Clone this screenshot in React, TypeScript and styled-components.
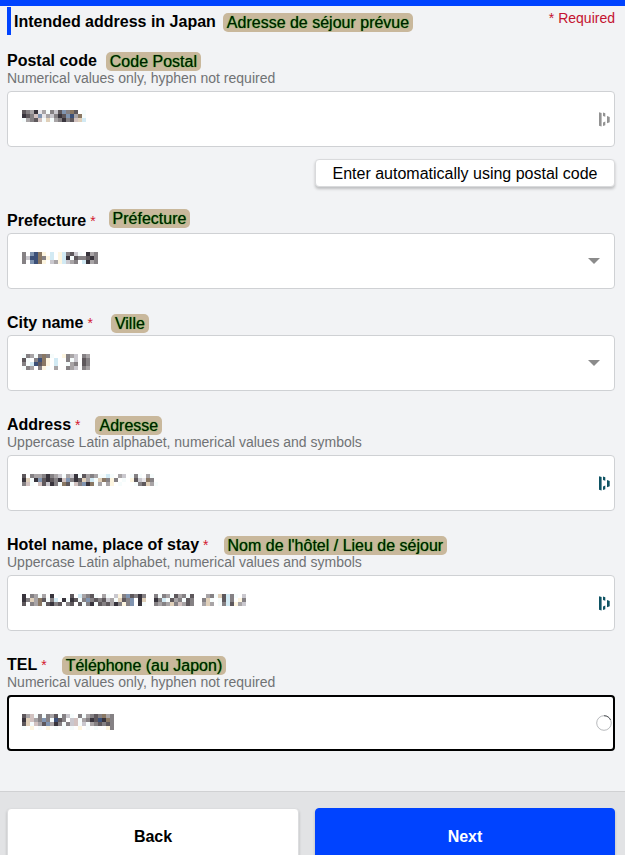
import React from 'react';
import styled, { createGlobalStyle, css } from 'styled-components';

const GlobalStyle = createGlobalStyle`
  *, *::before, *::after { box-sizing: border-box; }
  html { scrollbar-width: none; }
  body {
    margin: 0;
    background: #f2f3f5;
    color: #000;
    font-family: "Liberation Sans", Arial, sans-serif;
    font-size: 16px;
    line-height: 18px;
  }
  button, input, select { font: inherit; color: inherit; }
`;

const Page = styled.div`
  border-top: 6px solid #0043ff;
`;

const Form = styled.form`
  display: flex;
  flex-direction: column;
`;

const Content = styled.main`
  display: flex;
  flex-direction: column;
  gap: 24px;
  padding: 1px 10px 40px 7px;
`;

const Header = styled.header`
  display: flex;
  justify-content: space-between;
  align-items: flex-start;
  margin-bottom: -8px;
`;

const TitleRow = styled.div`
  display: flex;
  align-items: center;
  gap: 7px;
  height: 28px;
  padding: 2px 0 0 3px;
  border-left: 4px solid #0043ff;
`;

const Title = styled.h1`
  margin: 0;
  font-size: 16px;
`;

const RequiredNote = styled.span`
  padding-top: 2px;
  color: #c4122f;
  font-size: 14px;
`;

const Tag = styled.span`
  padding: 0 4px;
  border-radius: 5px;
  background: #c9b89c;
  color: #001c00;
  line-height: 19px;
  text-shadow: 0 0 1px #00a000;
  white-space: nowrap;
`;

const Field = styled.div`
  display: flex;
  flex-direction: column;
`;

const LabelRow = styled.div<{ $gap: number; $raised?: boolean }>`
  display: flex;
  align-items: center;
  gap: ${p => p.$gap}px;
  height: 18px;
  padding-top: 2px;

  ${Tag} {
    margin-bottom: ${p => (p.$raised ? 6 : 0)}px;
  }
`;

const Label = styled.label`
  font-weight: 700;
`;

const Star = styled.span`
  margin-left: 4px;
  color: #d3172f;
  font-size: 14px;
  font-weight: 400;
`;

const Hint = styled.div`
  color: #707274;
  font-size: 14px;
`;

const Control = styled.div`
  position: relative;
  display: grid;
  margin-top: 4px;
`;

const box = css`
  width: 100%;
  height: 56px;
  padding: 0 40px 0 14px;
  border: 1px solid #cfd1d4;
  border-radius: 4px;
  background: #fff;
  appearance: none;
  outline: none;
`;

const TextInput = styled.input<{ $active?: boolean }>`
  ${box}
  ${p => p.$active && 'border: 2px solid #000;'}
`;

const Select = styled.select`
  ${box}
`;

const Masked = styled.svg`
  position: absolute;
  top: 19px;
  left: 15px;
  pointer-events: none;
`;

const Adornment = styled.span<{ $right: number }>`
  position: absolute;
  top: 0;
  bottom: 0;
  right: ${p => p.$right}px;
  display: flex;
  align-items: center;
  pointer-events: none;
`;

const AutoFill = styled.button`
  align-self: flex-end;
  width: 300px;
  height: 28px;
  margin-top: -12px;
  padding: 2px 0 0;
  border: 1px solid #d9dadc;
  border-radius: 4px;
  background: #fff;
  box-shadow: 0 2px 3px rgba(0, 0, 0, 0.22);
`;

const Footer = styled.footer`
  display: grid;
  grid-template-columns: 292fr 300fr;
  gap: 16px;
  padding: 16px 10px 16px 7px;
  border-top: 1px solid #d0d1d3;
  background: #e2e3e5;
`;

const NavButton = styled.button<{ $primary?: boolean }>`
  height: 56px;
  padding: 2px 0 0;
  border: 1px solid ${p => (p.$primary ? '#0043ff' : '#dcdddf')};
  border-radius: 4px;
  background: ${p => (p.$primary ? '#0043ff' : '#fff')};
  color: ${p => (p.$primary ? '#fff' : '#000')};
  font-weight: 700;
  box-shadow: 0 2px 3px rgba(0, 0, 0, 0.2);
`;

const tones: Record<string, string> = {
  k: '#38343c', d: '#5e585c', g: '#858184', m: '#a8a4a6', l: '#cac8ce',
  e: '#e8e6ea', n: '#3c5078', b: '#8094b0', s: '#d2eaf4', y: '#fdf5e0',
  t: '#e0d0ba', r: '#8a7864', p: '#d2c2c0', w: '#f6fcfc',
};

function Mosaic({ rows }: { rows: string[] }) {
  const columns = Math.max(...rows.map(row => row.length));
  return (
    <Masked width={columns * 4} height={rows.length * 4} shapeRendering="crispEdges" aria-hidden="true">
      {rows.flatMap((row, y) =>
        [...row].map((tone, x) =>
          tone === '.' ? null : (
            <rect key={`${x}-${y}`} x={x * 4} y={y * 4} width="4" height="4" fill={tones[tone]} />
          ),
        ),
      )}
    </Masked>
  );
}

const ManagerIcon = ({ color }: { color: string }) => (
  <svg width="11" height="15" viewBox="0 0 11 15" fill={color} aria-hidden="true">
    <path d="M0 .3 2.6.9v13.5L0 13.8zM4 .5l2.3.8v3.5L4 4zM4 10.4l2.3-.8v3.6l-2.3.9zM8 4l2.7.9v5.4L8 11.2z" />
  </svg>
);

const CaretIcon = () => (
  <svg width="12" height="6" viewBox="0 0 12 6" aria-hidden="true">
    <path d="M0 0h12L6 6z" fill="#8b8b8b" />
  </svg>
);

const SpinnerIcon = () => (
  <svg width="16" height="16" viewBox="0 0 16 16" fill="none" aria-hidden="true">
    <circle cx="8" cy="8" r="7.3" stroke="#b8babd" />
    <path d="M8 .7A7.3 7.3 0 0 1 14.6 5" stroke="#55585c" />
  </svg>
);

type FieldData = {
  id: string;
  label: string;
  tag: string;
  gap: number;
  raised?: boolean;
  required?: boolean;
  hint?: string;
  kind: 'idle' | 'ready' | 'loading' | 'select';
  mask: string[];
};

const postal: FieldData = {
  id: 'postal', label: 'Postal code', tag: 'Code Postal', gap: 9, kind: 'idle',
  hint: 'Numerical values only, hyphen not required',
  mask: ['dgmkemwgldbgrd.w', 'kdgpbemlgkdbnmrw', 'wmgdpwtwmgkgdpts'],
};

const fields: FieldData[] = [
  {
    id: 'prefecture', label: 'Prefecture', tag: 'Préfecture', gap: 13, raised: true, required: true, kind: 'select',
    mask: ['g.bnry.s.ysgdlw.kmg', 'glnnrgys.yskwdggdkg', 'g.bnry.lmyslmg.skmg'],
  },
  {
    id: 'city', label: 'City name', tag: 'Ville', gap: 18, required: true, kind: 'select',
    mask: ['wgmwgrgw..ygml.gm', 'dw.gnry.s..gwl.dg', 'gwsndry.s..wmg.dg', 'wgm.gyw.m..gml.gm'],
  },
  {
    id: 'address', label: 'Address', tag: 'Adresse', gap: 15, required: true, kind: 'ready',
    hint: 'Uppercase Latin alphabet, numerical values and symbols',
    mask: ['d.gmmgkgmlwmlkwdmgmwwsw.ml.wgw.mw', 'ktwkbdkdgkpbgkdtmswtrgyg.w.ydlerg.', 'gpw.pdlkgwrdwpgbkrwm.my.w...wgdtmw'],
  },
  {
    id: 'hotel', label: 'Hotel name, place of stay', tag: "Nom de l'hôtel / Lieu de séjour", gap: 15, required: true, kind: 'ready',
    hint: 'Uppercase Latin alphabet, numerical values and symbols',
    mask: [
      'k.gmwm.k.w..d.smgdw.mw.lygbdgkg..gwgmwdmgwd...mgwtdsgw.l',
      'kgtmrdwgs.kwkdwgbgdgdlmwtdgb.kt..kgswdmgwdg..gtw.wdsg.yg',
      'd.gmrwdkgd.gd.dwgkwdgdmkgygb.kw..gmgmtgpmdg..mtm.wgsdyml',
    ],
  },
  {
    id: 'tel', label: 'TEL', tag: 'Téléphone (au Japon)', gap: 15, required: true, kind: 'loading',
    hint: 'Numerical values only, hyphen not required',
    mask: ['dmpwgwgmdwglw.gwmgdgrmg', 'ktpmgbgwndg.lpwmgkdnkrg', 'dtwpmdbmkgwglpwlwmgdgdg', 'w.y.w.y.w.w.w.y.w.w..yg'],
  },
];

function FormField({ field }: { field: FieldData }) {
  return (
    <Field>
      <LabelRow $gap={field.gap} $raised={field.raised}>
        <Label htmlFor={field.id}>
          {field.label}
          {field.required && <Star>*</Star>}
        </Label>
        <Tag>{field.tag}</Tag>
      </LabelRow>
      {field.hint && <Hint id={`${field.id}-hint`}>{field.hint}</Hint>}
      <Control>
        {field.kind === 'select' ? (
          <Select id={field.id} required defaultValue="">
            <option value="" />
          </Select>
        ) : (
          <TextInput
            id={field.id}
            type="text"
            required={field.required}
            $active={field.kind === 'loading'}
            aria-describedby={field.hint ? `${field.id}-hint` : undefined}
          />
        )}
        <Mosaic rows={field.mask} />
        <Adornment $right={field.kind === 'select' ? 15 : field.kind === 'loading' ? 3 : 5}>
          {field.kind === 'select' && <CaretIcon />}
          {field.kind === 'idle' && <ManagerIcon color="#929292" />}
          {field.kind === 'ready' && <ManagerIcon color="#0e5363" />}
          {field.kind === 'loading' && <SpinnerIcon />}
        </Adornment>
      </Control>
    </Field>
  );
}

export default function App() {
  return (
    <Page>
      <GlobalStyle />
      <Form onSubmit={event => event.preventDefault()}>
        <Content>
          <Header>
            <TitleRow>
              <Title>Intended address in Japan</Title>
              <Tag>Adresse de séjour prévue</Tag>
            </TitleRow>
            <RequiredNote>* Required</RequiredNote>
          </Header>
          <FormField field={postal} />
          <AutoFill type="button">Enter automatically using postal code</AutoFill>
          {fields.map(field => (
            <FormField key={field.id} field={field} />
          ))}
        </Content>
        <Footer>
          <NavButton type="button">Back</NavButton>
          <NavButton type="submit" $primary>Next</NavButton>
        </Footer>
      </Form>
    </Page>
  );
}
